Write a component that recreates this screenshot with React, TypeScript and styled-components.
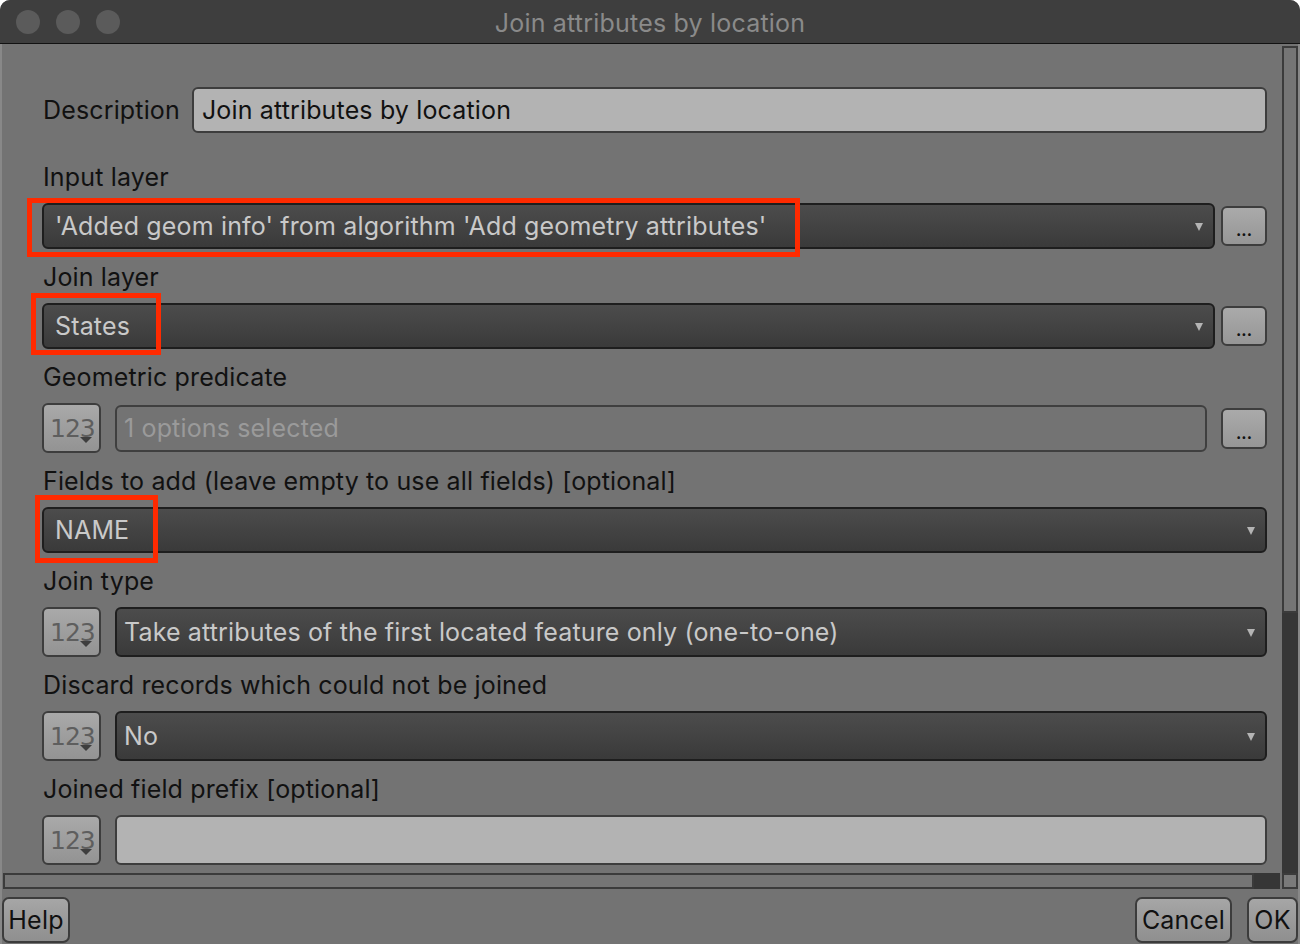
import React from "react";
import styled, { createGlobalStyle } from "styled-components";

const Global = createGlobalStyle`
  html, body { margin: 0; padding: 0; background: #ffffff; }
  body { font-family: Inter, "Liberation Sans", sans-serif; }
  * { box-sizing: border-box; }
`;

const Window = styled.div`
  width: 1300px;
  height: 944px;
  display: flex;
  flex-direction: column;
  border-radius: 10px 10px 0 0;
  overflow: hidden;
  background: #737373;
  font-family: Inter, "Liberation Sans", sans-serif;
`;

const TitleBar = styled.div`
  height: 44px;
  flex: none;
  background: #3e3e3e;
  border-bottom: 1px solid #121212;
  display: grid;
  grid-template-columns: 1fr auto 1fr;
  align-items: center;
  padding-left: 16px;
`;

const Lights = styled.div`
  display: flex;
  gap: 16px;
`;

const Light = styled.span`
  width: 24px;
  height: 24px;
  border-radius: 50%;
  background: #5b5b5b;
`;

const Title = styled.div`
  color: #8a8a8a;
  font-size: 25px;
  letter-spacing: 0.2px;
  margin-left: -16px;
  padding-top: 2px;
`;

const Main = styled.div`
  flex: 1;
  display: flex;
  flex-direction: column;
  border-left: 2px solid #888888;
  border-right: 2px solid #888888;
  min-height: 0;
`;

const ScrollRow = styled.div`
  display: flex;
  height: 829px;
  flex: none;
`;

const Content = styled.div`
  flex: 1;
  overflow: hidden;
  padding: 43px 13px 0 40px;
  display: flex;
  flex-direction: column;
`;

const DescRow = styled.div`
  display: flex;
  align-items: center;
  gap: 12px;
  margin-bottom: 30px;
`;

const Label = styled.div`
  color: #111111;
  font-size: 25px;
  line-height: 28px;
  letter-spacing: 0.15px;
  white-space: nowrap;
  padding-left: 1px;
`;

const Group = styled.div`
  display: flex;
  flex-direction: column;
  gap: 12px;
  margin-bottom: 14px;
  position: relative;
`;

const WidgetRow = styled.div<{ $gap?: number }>`
  display: flex;
  align-items: center;
  gap: ${(p) => p.$gap ?? 6}px;
  position: relative;
`;

const LightInput = styled.div<{ $h?: number }>`
  flex: 1;
  height: ${(p) => p.$h ?? 46}px;
  background: #b3b3b3;
  border: 2px solid #3d3d3d;
  border-radius: 6px;
  display: flex;
  align-items: center;
  padding-left: 8px;
  color: #111111;
  font-size: 25px;
  letter-spacing: 0.15px;
`;

const Combo = styled.div<{ $h?: number; $pl?: number }>`
  flex: 1;
  height: ${(p) => p.$h ?? 46}px;
  background: linear-gradient(#4c4c4c, #3a3a3a);
  border: 2px solid #1e1e1e;
  border-radius: 6px;
  display: flex;
  align-items: center;
  padding: 0 10px 0 ${(p) => p.$pl ?? 11}px;
  color: #c9c9c9;
  font-size: 25px;
  letter-spacing: 0.15px;
  position: relative;
`;

const ComboText = styled.span`
  flex: 1;
  white-space: nowrap;
`;

const Arrow = styled.span`
  width: 0;
  height: 0;
  border-left: 4px solid transparent;
  border-right: 4px solid transparent;
  border-top: 8px solid #b4b4b4;
  margin-top: 2px;
`;

const OutlineField = styled.div`
  flex: 1;
  height: 47px;
  border: 2px solid #3f3f3f;
  border-radius: 6px;
  display: flex;
  align-items: center;
  padding-left: 7px;
  color: #9a9a9a;
  font-size: 25px;
  letter-spacing: 0.15px;
`;

const DotsButton = styled.div<{ $h?: number }>`
  width: 46px;
  height: ${(p) => p.$h ?? 40}px;
  flex: none;
  background: linear-gradient(#aaaaaa, #969696);
  border: 2px solid #3d3d3d;
  border-radius: 6px;
  display: flex;
  align-items: flex-end;
  justify-content: center;
  padding-bottom: 9px;
  color: #111111;
  font-size: 16px;
  font-weight: 700;
  line-height: 10px;
  letter-spacing: 0px;
`;

const NumButton = styled.div`
  width: 59px;
  height: 50px;
  flex: none;
  background: linear-gradient(#a9a9a9, #939393);
  border: 2px solid #3d3d3d;
  border-radius: 6px;
  position: relative;
  display: flex;
  align-items: center;
  padding-left: 6px;
  color: #5e5e5e;
  font-size: 25px;
  letter-spacing: -1px;
  font-family: "DejaVu Sans", sans-serif;
`;

const NumCaret = styled.span`
  position: absolute;
  left: 36px;
  top: 32px;
  width: 0;
  height: 0;
  border-left: 6px solid transparent;
  border-right: 6px solid transparent;
  border-top: 6px solid #3e3e3e;
`;

const Highlight = styled.div<{ $l: number; $t: number; $w: number; $h: number }>`
  position: absolute;
  left: ${(p) => p.$l}px;
  top: ${(p) => p.$t}px;
  width: ${(p) => p.$w}px;
  height: ${(p) => p.$h}px;
  border: 5px solid #ff2a00;
  pointer-events: none;
`;

const VScroll = styled.div`
  width: 16px;
  flex: none;
  margin: 2px 0 0 2px;
  display: flex;
  flex-direction: column;
  background: #363636;
`;

const VThumb = styled.div`
  height: 567px;
  background: #757575;
  border: 2px solid #3b3b3b;
`;

const HScrollRow = styled.div`
  display: flex;
  height: 16px;
  flex: none;
`;

const HScroll = styled.div`
  flex: 1;
  display: flex;
  background: #363636;
  margin-left: 1px;
`;

const HThumb = styled.div`
  width: 1251px;
  background: #757575;
  border: 2px solid #3b3b3b;
`;

const Corner = styled.div`
  width: 16px;
  background: #7a7a7a;
  border: 2px solid #3b3b3b;
  margin-left: 2px;
`;

const ButtonBar = styled.div`
  flex: 1;
  display: flex;
  align-items: flex-start;
  padding: 8px 0 0 0;
  gap: 15px;
`;

const Spacer = styled.div`
  flex: 1;
`;

const PushButton = styled.div<{ $w: number }>`
  width: ${(p) => p.$w}px;
  height: 46px;
  background: linear-gradient(#a6a6a6, #8f8f8f);
  border: 2px solid #3c3c3c;
  border-radius: 7px;
  display: flex;
  align-items: center;
  justify-content: center;
  color: #111111;
  font-size: 25px;
  letter-spacing: 0.2px;
`;

const Num = () => (
  <NumButton>
    123
    <NumCaret />
  </NumButton>
);

export default function App() {
  return (
    <>
      <Global />
      <Window>
        <TitleBar>
          <Lights>
            <Light />
            <Light />
            <Light />
          </Lights>
          <Title>Join attributes by location</Title>
          <span />
        </TitleBar>
        <Main>
          <ScrollRow>
            <Content>
              <DescRow>
                <Label>Description</Label>
                <LightInput>Join attributes by location</LightInput>
              </DescRow>

              <Group>
                <Label>Input layer</Label>
                <WidgetRow>
                  <Combo>
                    <ComboText>'Added geom info' from algorithm 'Add geometry attributes'</ComboText>
                    <Arrow />
                  </Combo>
                  <DotsButton>...</DotsButton>
                  <Highlight $l={-15} $t={-5} $w={773} $h={59} />
                </WidgetRow>
              </Group>

              <Group>
                <Label>Join layer</Label>
                <WidgetRow>
                  <Combo>
                    <ComboText>States</ComboText>
                    <Arrow />
                  </Combo>
                  <DotsButton>...</DotsButton>
                  <Highlight $l={-11} $t={-10} $w={130} $h={62} />
                </WidgetRow>
              </Group>

              <Group>
                <Label>Geometric predicate</Label>
                <WidgetRow $gap={14}>
                  <Num />
                  <OutlineField>1 options selected</OutlineField>
                  <DotsButton $h={41}>...</DotsButton>
                </WidgetRow>
              </Group>

              <Group>
                <Label>Fields to add (leave empty to use all fields) [optional]</Label>
                <WidgetRow>
                  <Combo>
                    <ComboText>NAME</ComboText>
                    <Arrow />
                  </Combo>
                  <Highlight $l={-7} $t={-12} $w={123} $h={68} />
                </WidgetRow>
              </Group>

              <Group>
                <Label>Join type</Label>
                <WidgetRow $gap={14}>
                  <Num />
                  <Combo $h={50} $pl={7}>
                    <ComboText>Take attributes of the first located feature only (one-to-one)</ComboText>
                    <Arrow />
                  </Combo>
                </WidgetRow>
              </Group>

              <Group>
                <Label>Discard records which could not be joined</Label>
                <WidgetRow $gap={14}>
                  <Num />
                  <Combo $h={50} $pl={7}>
                    <ComboText>No</ComboText>
                    <Arrow />
                  </Combo>
                </WidgetRow>
              </Group>

              <Group>
                <Label>Joined field prefix [optional]</Label>
                <WidgetRow $gap={14}>
                  <Num />
                  <LightInput $h={50} />
                </WidgetRow>
              </Group>
            </Content>
            <VScroll>
              <VThumb />
            </VScroll>
          </ScrollRow>
          <HScrollRow>
            <HScroll>
              <HThumb />
            </HScroll>
            <Corner />
          </HScrollRow>
          <ButtonBar>
            <PushButton $w={68}>Help</PushButton>
            <Spacer />
            <PushButton $w={97}>Cancel</PushButton>
            <PushButton $w={51}>OK</PushButton>
          </ButtonBar>
        </Main>
      </Window>
    </>
  );
}
